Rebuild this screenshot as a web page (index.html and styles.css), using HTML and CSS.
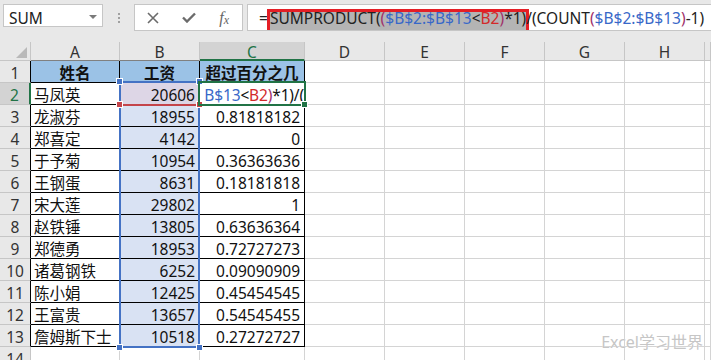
FILE: index.html
```html
<!DOCTYPE html>
<html lang="zh-CN">
<head>
    <meta charset="UTF-8">
    <title>超过百分之几</title>
    <link rel="stylesheet" href="styles.css">
</head>
<body>
<div class="bar">
    <div class="namebox"><span>SUM</span><span class="caret"></span></div>
    <div class="grip"></div>
    <div class="fbtns">
        <span class="fb">
            <svg width="12" height="12" viewBox="0 0 12 12"><path d="M1 1L11 11M11 1L1 11" stroke="#6b6b6b" stroke-width="1.6" fill="none"/></svg>
        </span>
        <span class="fb">
            <svg width="14" height="11" viewBox="0 0 14 11"><path d="M1 5.5L5 9.5L13 1.5" stroke="#6b6b6b" stroke-width="2.4" fill="none"/></svg>
        </span>
        <span class="fb fx"><i>f</i><i class="sx">x</i></span>
    </div>
    <div class="formula"><span class="eq">=</span><span class="sel">SUMPRODUCT(<span class="pa">(</span><span class="rb">$B$2:$B$13</span>&lt;<span class="rr">B2</span><span class="pa">)</span>*1)</span>/(COUNT<span class="pa">(</span><span class="rb">$B$2:$B$13</span><span class="pa">)</span>-1)</div>
</div>

<div class="sheet">
    <div class="row head">
        <div class="corner"><span class="tri"></span></div>
        <div class="tb">A</div><div class="tb">B</div><div class="on">C</div>
        <div>D</div><div>E</div><div>F</div><div>G</div><div>H</div><div></div>
    </div>
    <div class="row">
        <div class="rh tl">1</div>
        <div class="t h1">姓名</div><div class="t h1">工资</div><div class="t h1">超过百分之几</div>
        <div></div><div></div><div></div><div></div><div></div><div></div>
    </div>
    <div class="row">
        <div class="rh on">2</div>
        <div class="t txt">马凤英</div><div class="t num b2">20606</div>
        <div class="t edit"><span><span class="rb">B$13</span>&lt;<span class="rr">B2</span><span class="pa">)</span>*1)/(</span></div>
        <div></div><div></div><div></div><div></div><div></div><div></div>
    </div>
    <div class="row">
        <div class="rh tl">3</div>
        <div class="t txt">龙淑芬</div><div class="t num rng">18955</div><div class="t num">0.81818182</div>
        <div></div><div></div><div></div><div></div><div></div><div></div>
    </div>
    <div class="row">
        <div class="rh tl">4</div>
        <div class="t txt">郑喜定</div><div class="t num rng">4142</div><div class="t num">0</div>
        <div></div><div></div><div></div><div></div><div></div><div></div>
    </div>
    <div class="row">
        <div class="rh tl">5</div>
        <div class="t txt">于予菊</div><div class="t num rng">10954</div><div class="t num">0.36363636</div>
        <div></div><div></div><div></div><div></div><div></div><div></div>
    </div>
    <div class="row">
        <div class="rh tl">6</div>
        <div class="t txt">王钢蛋</div><div class="t num rng">8631</div><div class="t num">0.18181818</div>
        <div></div><div></div><div></div><div></div><div></div><div></div>
    </div>
    <div class="row">
        <div class="rh tl">7</div>
        <div class="t txt">宋大莲</div><div class="t num rng">29802</div><div class="t num">1</div>
        <div></div><div></div><div></div><div></div><div></div><div></div>
    </div>
    <div class="row">
        <div class="rh tl">8</div>
        <div class="t txt">赵铁锤</div><div class="t num rng">13805</div><div class="t num">0.63636364</div>
        <div></div><div></div><div></div><div></div><div></div><div></div>
    </div>
    <div class="row">
        <div class="rh tl">9</div>
        <div class="t txt">郑德勇</div><div class="t num rng">18953</div><div class="t num">0.72727273</div>
        <div></div><div></div><div></div><div></div><div></div><div></div>
    </div>
    <div class="row">
        <div class="rh tl">10</div>
        <div class="t txt">诸葛钢铁</div><div class="t num rng">6252</div><div class="t num">0.09090909</div>
        <div></div><div></div><div></div><div></div><div></div><div></div>
    </div>
    <div class="row">
        <div class="rh tl">11</div>
        <div class="t txt">陈小娟</div><div class="t num rng">12425</div><div class="t num">0.45454545</div>
        <div></div><div></div><div></div><div></div><div></div><div></div>
    </div>
    <div class="row">
        <div class="rh tl">12</div>
        <div class="t txt">王富贵</div><div class="t num rng">13657</div><div class="t num">0.54545455</div>
        <div></div><div></div><div></div><div></div><div></div><div></div>
    </div>
    <div class="row">
        <div class="rh tl">13</div>
        <div class="t txt">詹姆斯下士</div><div class="t num rng">10518</div><div class="t num">0.27272727</div>
        <div></div><div></div><div></div><div></div><div></div><div></div>
    </div>
    <div class="row">
        <div class="rh">14</div>
        <div></div><div></div><div></div>
        <div></div><div></div><div></div><div></div><div></div><div></div>
    </div>

    <!-- reference highlights drawn over the grid -->
    <div class="rng-box"></div>
    <div class="red-line"></div>
    <div class="hd blue" style="left:116px;top:36px"></div>
    <div class="hd blue" style="left:196px;top:36px"></div>
    <div class="hd blue" style="left:116px;top:302px"></div>
    <div class="hd blue" style="left:196px;top:302px"></div>
    <div class="hd red" style="left:116px;top:59px"></div>
    <div class="hd red" style="left:196px;top:59px"></div>
    <div class="act-box"></div>
    <div class="hd green" style="left:301px;top:59px"></div>

    <div class="wm">Excel学习世界</div>
</div>
</body>
</html>
```

FILE: styles.css
```css
* {
    box-sizing: border-box;
}

html, body {
    margin: 0;
    height: 100%;
    overflow: hidden;
}

body {
    background: #fff;
    font-family: "Noto Sans", "Noto Sans CJK SC", sans-serif;
    font-size: 15.5px;
    color: #111;
}

/* formula bar */
.bar {
    height: 42px;
    background: #e8e8e8;
    display: flex;
    align-items: flex-start;
    padding: 4px 0 0 3px;
}

.namebox {
    width: 100px;
    height: 23px;
    background: #fff;
    border: 1px solid #c6c6c6;
    display: flex;
    justify-content: space-between;
    align-items: flex-start;
    padding: 7px 5px 0 5px;
    line-height: 12px;
    color: #222;
}

.caret {
    width: 0;
    height: 0;
    border-left: 4px solid transparent;
    border-right: 4px solid transparent;
    border-top: 4px solid #7a7a7a;
    margin-top: 3px;
}

.grip {
    width: 2px;
    height: 12px;
    margin: 9px 0 0 15px;
    background: repeating-linear-gradient(#a0a0a0 0 2px, transparent 2px 4px);
}

.fbtns {
    width: 109px;
    height: 27px;
    margin-left: 14px;
    background: #fff;
    border: 1px solid #c6c6c6;
    display: flex;
    align-items: center;
}

.fb {
    width: 36px;
    display: flex;
    justify-content: center;
}

.fx {
    font-family: "Liberation Serif", serif;
    font-size: 16px;
    color: #666;
    line-height: 1;
}

.fx .sx {
    font-size: 12px;
    margin-top: 4px;
}

.formula {
    flex: 1;
    height: 27px;
    margin-left: 4px;
    background: #fff;
    border: 1px solid #c6c6c6;
    border-right: none;
    padding: 7px 0 0 11px;
    line-height: 12px;
    white-space: nowrap;
    overflow: hidden;
    color: #222;
}

.sel {
    display: inline-block;
    margin-left: 2px;
    padding-bottom: 6px;
    background: #b4b4b4;
    outline: 3px solid #e41e26;
}

.rb {
    color: #3868c8;
}

.rr {
    color: #d22a2a;
}

.pa {
    color: #a0306a;
}

/* sheet grid */
.sheet {
    position: relative;
}

.row {
    display: grid;
    grid-template-columns: 31px 89px 80px 105px 80px 80px 80px 80px 80px 1fr;
    height: 22px;
    line-height: 12px;
}

.row > div {
    border-right: 1px solid #d4d4d4;
    border-bottom: 1px solid #d4d4d4;
    padding-top: 6px;
    white-space: nowrap;
}

.row.head {
    height: 19px;
    background: #e8e8e8;
}

.row.head > div {
    padding-top: 4px;
    text-align: center;
    color: #333;
    border-color: #c6c6c6;
}

.row.head > .tb {
    border-bottom-color: #808080;
}

.row.head > .on {
    background: #d3d3d3;
    color: #217346;
    border-bottom: 2px solid #217346;
}

.row > .corner {
    display: flex;
    justify-content: flex-end;
    align-items: flex-end;
    padding: 0 3px 2px 0;
}

.tri {
    width: 0;
    height: 0;
    border-left: 11px solid transparent;
    border-bottom: 11px solid #b9b9b9;
}

.row > .rh {
    background: #e8e8e8;
    color: #333;
    text-align: center;
    border-color: #c6c6c6;
}

.row > .rh.tl {
    border-right-color: #000;
}

.row > .rh.on {
    background: #d3d3d3;
    color: #217346;
    border-right: 2px solid #217346;
}

.row > .t {
    border-color: #000;
}

.row > .h1 {
    background: #9bc2e6;
    font-weight: bold;
    text-align: center;
}

.txt {
    padding-left: 3px;
}

.row > .num {
    text-align: right;
    padding-right: 4px;
}

.rng {
    background: #d9e2f3;
}

.b2 {
    background: #ddd6e6;
}

.row > .edit {
    display: flex;
    justify-content: flex-end;
    padding-right: 0;
    letter-spacing: -0.15px;
}

/* highlights */
.rng-box {
    position: absolute;
    left: 119px;
    top: 39px;
    width: 81px;
    height: 267px;
    border: 2px solid #4472c4;
}

.red-line {
    position: absolute;
    left: 121px;
    top: 62px;
    width: 77px;
    height: 2px;
    background: #c4444a;
}

.act-box {
    position: absolute;
    left: 198px;
    top: 39px;
    width: 108px;
    height: 25px;
    border: 2px solid #217346;
}

.hd {
    position: absolute;
    width: 7px;
    height: 7px;
    border: 1px solid #fff;
}

.hd.blue {
    background: #4472c4;
}

.hd.red {
    background: #c4444a;
}

.hd.green {
    background: #217346;
}

.wm {
    position: absolute;
    right: 8px;
    top: 292px;
    font-size: 16px;
    line-height: 16px;
    color: #c6c6c6;
    text-shadow: 0 0 1px #fff;
}
```
